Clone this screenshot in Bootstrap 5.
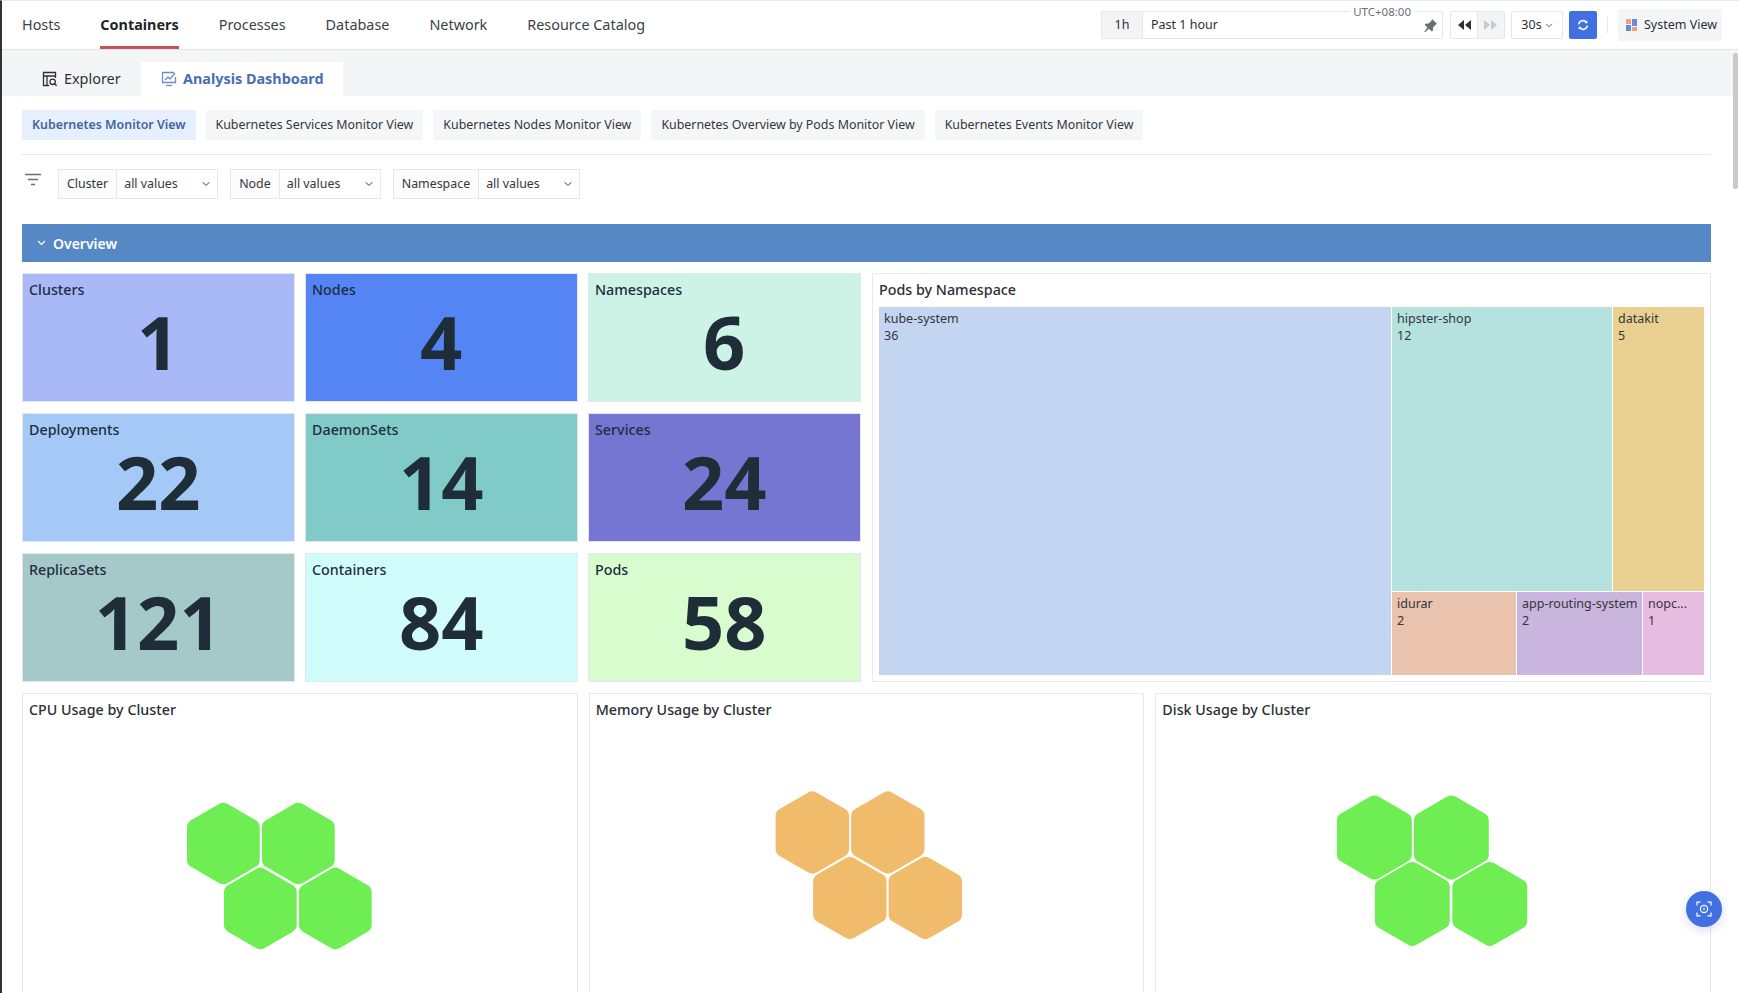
<!DOCTYPE html>
<html lang="en">
<head>
<meta charset="UTF-8" />
<meta name="viewport" content="width=device-width, initial-scale=1.0"/>
<title>Containers - Analysis Dashboard</title>
<link href="https://cdn.jsdelivr.net/npm/bootstrap@5.3.0/dist/css/bootstrap.min.css" rel="stylesheet">
<style>
  html, body { height: 100%; overflow: hidden; }
  body {
    font-family: "Noto Sans", "Open Sans", sans-serif;
    font-size: 12.5px;
    color: #2b2f36;
    background: #fff;
  }
  .app-shell {
    position: relative;
    height: 993px;
    overflow: hidden;
    border-left: 2px solid #333;
    border-top: 1px solid #e6e8ea;
  }
  .top-bar { height: 49px; border-bottom: 1px solid #e3e5e8; padding: 0 16px 0 20px; }
  .main-nav { gap: 40px; height: 100%; }
  .main-nav a {
    display: block;
    height: 48px;
    line-height: 48px;
    font-size: 14.4px;
    color: #3a3f47;
    text-decoration: none;
  }
  .main-nav a.is-on { font-weight: 700; color: #20242a; border-bottom: 3px solid #c2535c; }
  .bar-tools { gap: 6px; }
  .time-box {
    position: relative;
    width: 342px;
    height: 28px;
    border: 1px solid #e5e7ea;
    border-radius: 2px;
    margin-right: 1px;
  }
  .time-tag { width: 41px; background: #f3f4f6; border-right: 1px solid #e5e7ea; }
  .utc-tag {
    position: absolute;
    top: -7px;
    right: 28px;
    padding: 0 3px;
    background: #fff;
    font-size: 11.5px;
    line-height: 14px;
    color: #6b7078;
  }
  .ctl-box { height: 28px; border: 1px solid #e5e7ea; border-radius: 2px; background: #fff; }
  .rewind-box { width: 55px; }
  .rate-box { width: 52px; gap: 3px; }
  .ctl-half { flex: 1; }
  .ctl-half + .ctl-half { background: #f3f4f6; border-left: 1px solid #e5e7ea; }
  .refresh-btn { width: 28px; height: 28px; background: #4170e0; border-radius: 2px; border: 0; padding: 0; }
  .bar-sep { width: 1px; height: 16px; background: #e6e8ea; margin: 0 4px; }
  .system-btn { width: 104px; height: 32px; padding-left: 8px; background: #f3f5f7; gap: 7px; border-radius: 2px; white-space: nowrap; }
  .sub-bar { height: 46px; background: #f3f5f6; padding: 12px 0 0 20px; }
  .sub-tab { height: 34px; padding: 0 0 1px 20px; font-size: 14.4px; gap: 6px; color: #2e3238; width: 119px; }
  .sub-tab.is-on { background: #fff; color: #4a6db3; font-weight: 700; width: 202px; padding-left: 20px; }
  .view-tabs { padding: 14px 0 14px; gap: 10px; border-bottom: 1px solid #e6e8ea; }
  .view-tab {
    height: 30px;
    line-height: 30px;
    padding: 0 10px;
    background: #f4f6f8;
    border-radius: 2px;
    font-size: 12.4px;
    color: #33373d;
  }
  .view-tab.is-on { background: #e6effd; color: #42649f; font-weight: 600; }
  .page-body { padding: 0 27px 0 20px; }
  .filter-row { padding: 14px 0 25px; gap: 12px; }
  .filter-ico { width: 18px; margin: 0 4px 8px 2px; }
  .filter-row .input-group { width: auto; flex: none; height: 30px; }
  .filter-row .input-group-text {
    height: 30px;
    padding: 0 8px;
    font-size: 12.4px;
    color: #33373d;
    background: #fcfcfd;
    border: 1px solid #e5e7ea;
    border-radius: 0;
  }
  .filter-row .form-select {
    width: 101px;
    height: 30px;
    min-height: 30px;
    padding: 0 22px 0 7px;
    margin-left: 0 !important;
    font-size: 12.4px;
    color: #33373d;
    border: 1px solid #e5e7ea;
    border-left: 0;
    border-radius: 0;
    background-position: right 6px center;
    background-size: 10px 8px;
    flex: none;
  }
  .section-bar {
    height: 38px;
    background: #5588c4;
    color: #fff;
    font-size: 14px;
    font-weight: 600;
    padding-left: 15px;
    gap: 7px;
    margin-bottom: 11px;
  }
  .stat-grid {
    display: grid;
    grid-template-columns: 272.5px 272.5px 272.5px 1fr;
    grid-template-rows: 129px 129px 129px;
    column-gap: 10.5px;
    row-gap: 11px;
    margin-bottom: 11px;
  }
  .stat-tile { border: 1px solid #e3e8f0; padding: 6px; color: #1f2d3d; }
  .tile-label { font-size: 14.3px; line-height: 20px; font-weight: 500; }
  .tile-num {
    font-size: 74px;
    font-weight: 700;
    line-height: 74px;
    text-align: center;
    color: #1f2d38;
    margin-top: 5px;
  }
  .t-clusters { background: #a9b9f7; }
  .t-nodes { background: #5585f5; }
  .t-namespaces { background: #cdf3e7; }
  .t-deployments { background: #a4c9f7; }
  .t-daemonsets { background: #80cbc8; }
  .t-services { background: #7675d1; }
  .t-replicasets { background: #a5c8c9; }
  .t-containers { background: #d0fdfc; }
  .t-pods { background: #d9fccf; }
  .chart-panel { border: 1px solid #e6e8ea; background: #fff; }
  .panel-title { font-size: 14.3px; line-height: 20px; font-weight: 500; color: #2b2f36; padding: 6px 6px 7px; }
  .tree-panel { grid-column: 4; grid-row: 1 / 4; padding-bottom: 6px; margin-left: 1px; }
  .tree-map { height: 368px; margin: 0 6px; gap: 1px; }
  .tree-cell { padding: 3px 5px; font-size: 12.5px; line-height: 17px; color: #33363c; overflow: hidden; }
  .c-kube { background: #c4d5f2; width: 512px; flex: none; }
  .c-hipster { background: #b5e2df; width: 220px; flex: none; }
  .c-datakit { background: #e9cf90; flex: 1; }
  .c-idurar { background: #e9c3ae; width: 124px; flex: none; }
  .c-app { background: #c9b5de; width: 125px; flex: none; white-space: nowrap; }
  .c-nopc { background: #e6bde1; flex: 1; }
  .tree-right { gap: 1px; }
  .tree-top { height: 284px; gap: 1px; }
  .tree-bottom { flex: 1; gap: 1px; }
  .usage-row { display: grid; grid-template-columns: repeat(3, 1fr); column-gap: 11px; }
  .usage-card { height: 320px; }
  .usage-card svg { display: block; width: 100%; height: 280px; margin-top: 1px; }
  .hex-green { fill: #6fee53; stroke: #6fee53; }
  .hex-amber { fill: #f0bb6b; stroke: #f0bb6b; }
  .scroll-thumb {
    position: absolute;
    top: 52px;
    right: 0;
    width: 5px;
    height: 136px;
    background: #c9c9c9;
    border-radius: 3px;
  }
  .float-btn {
    position: absolute;
    left: 1684px;
    top: 890px;
    width: 36px;
    height: 36px;
    border-radius: 50%;
    background: #4170e0;
    box-shadow: 0 3px 10px rgba(40, 60, 120, .18);
    border: 0;
    padding: 0;
  }
</style>
</head>
<body>
<div class="app-shell">

  <header class="top-bar d-flex align-items-center">
    <nav class="main-nav d-flex">
      <a href="#">Hosts</a>
      <a href="#" class="is-on">Containers</a>
      <a href="#">Processes</a>
      <a href="#">Database</a>
      <a href="#">Network</a>
      <a href="#">Resource Catalog</a>
    </nav>
    <div class="bar-tools ms-auto d-flex align-items-center">
      <div class="time-box d-flex align-items-stretch">
        <div class="time-tag d-flex align-items-center justify-content-center">1h</div>
        <div class="flex-grow-1 d-flex align-items-center ps-2">Past 1 hour</div>
        <div class="d-flex align-items-center pe-1">
          <svg width="15" height="15" viewBox="0 0 16 16" fill="#6a6d72"><path d="M9.6 1l5.4 5.4-1.3.5-3 3.3-.3 3.6-1.2.6-2.8-2.9L2.4 15l-1.2-.2 3.5-4.6L1.9 7.4l.6-1.2 3.6-.3 3.1-3.2z"/></svg>
        </div>
        <span class="utc-tag">UTC+08:00</span>
      </div>
      <div class="ctl-box rewind-box d-flex align-items-stretch">
        <div class="ctl-half d-flex align-items-center justify-content-center">
          <svg width="14" height="10" viewBox="0 0 14 10" fill="#2c2f34"><path d="M7 0v10L1 5zM14 0v10L8 5z"/></svg>
        </div>
        <div class="ctl-half d-flex align-items-center justify-content-center">
          <svg width="14" height="10" viewBox="0 0 14 10" fill="#c6c9cd"><path d="M0 0v10l6-5zM7 0v10l6-5z"/></svg>
        </div>
      </div>
      <div class="ctl-box rate-box d-flex align-items-center justify-content-center">
        30s
        <svg width="8" height="5" viewBox="0 0 9 6" fill="none" stroke="#4c5056" stroke-width="1.1"><path d="M1 1l3.5 3.5L8 1"/></svg>
      </div>
      <button class="refresh-btn d-flex align-items-center justify-content-center" type="button" aria-label="Refresh">
        <svg width="12" height="12" viewBox="0 0 14 14" fill="none" stroke="#fff" stroke-width="1.8"><path d="M2 6.2A5 5 0 0 1 11 4"/><path d="M12 7.8A5 5 0 0 1 3 10"/><path d="M12 1.6V5H8.8z" fill="#fff" stroke="none"/><path d="M2 12.4V9h3.2z" fill="#fff" stroke="none"/></svg>
      </button>
      <span class="bar-sep"></span>
      <div class="system-btn d-flex align-items-center">
        <svg width="11" height="12" viewBox="0 0 11 12"><rect x="0" y="0" width="5" height="5" fill="#e8a184"/><rect x="0" y="6" width="5" height="6" fill="#6b8ad0"/><rect x="6" y="0" width="5" height="7" fill="#6b8ad0"/><rect x="6" y="8" width="5" height="4" fill="#e8a184"/></svg>
        System View
      </div>
    </div>
  </header>

  <div class="sub-bar d-flex">
    <div class="sub-tab d-flex align-items-center">
      <svg width="16" height="16" viewBox="0 0 16 16" fill="none" stroke="#2e3238" stroke-width="1.3"><path d="M7 14.5H1.5v-13h12V7"/><path d="M1.5 5h12M5 5v9.5"/><circle cx="10.6" cy="10.8" r="2.7"/><path d="M12.6 12.8l2 2"/></svg>
      Explorer
    </div>
    <div class="sub-tab is-on d-flex align-items-center">
      <svg width="16" height="16" viewBox="0 0 16 16" fill="none" stroke="#6c8ccc" stroke-width="1.3"><path d="M13 1.5H1.5v10h13V6"/><path d="M5 14.5h6"/><path d="M4 9l3-3 2 2 5-6"/></svg>
      Analysis Dashboard
    </div>
  </div>

  <div class="page-body">
    <div class="view-tabs d-flex">
      <div class="view-tab is-on">Kubernetes Monitor View</div>
      <div class="view-tab">Kubernetes Services Monitor View</div>
      <div class="view-tab">Kubernetes Nodes Monitor View</div>
      <div class="view-tab">Kubernetes Overview by Pods Monitor View</div>
      <div class="view-tab">Kubernetes Events Monitor View</div>
    </div>

    <div class="filter-row d-flex align-items-center">
      <svg class="filter-ico" width="16" height="14" viewBox="0 0 16 14" fill="none" stroke="#6a6e75" stroke-width="1.4"><path d="M0 1.5h16M3 6.5h10M6 11.5h4"/></svg>
      <div class="input-group">
        <span class="input-group-text">Cluster</span>
        <select class="form-select"><option>all values</option></select>
      </div>
      <div class="input-group">
        <span class="input-group-text">Node</span>
        <select class="form-select"><option>all values</option></select>
      </div>
      <div class="input-group">
        <span class="input-group-text">Namespace</span>
        <select class="form-select"><option>all values</option></select>
      </div>
    </div>

    <div class="section-bar d-flex align-items-center">
      <svg width="9" height="6" viewBox="0 0 9 6" fill="none" stroke="#fff" stroke-width="1.2"><path d="M1 1l3.5 3.5L8 1"/></svg>
      Overview
    </div>

    <div class="stat-grid">
      <div class="stat-tile t-clusters"><div class="tile-label">Clusters</div><div class="tile-num">1</div></div>
      <div class="stat-tile t-nodes"><div class="tile-label">Nodes</div><div class="tile-num">4</div></div>
      <div class="stat-tile t-namespaces"><div class="tile-label">Namespaces</div><div class="tile-num">6</div></div>
      <div class="chart-panel tree-panel d-flex flex-column">
        <div class="panel-title">Pods by Namespace</div>
        <div class="tree-map d-flex">
          <div class="tree-cell c-kube">kube-system<br>36</div>
          <div class="tree-right flex-grow-1 d-flex flex-column">
            <div class="tree-top d-flex">
              <div class="tree-cell c-hipster">hipster-shop<br>12</div>
              <div class="tree-cell c-datakit">datakit<br>5</div>
            </div>
            <div class="tree-bottom d-flex">
              <div class="tree-cell c-idurar">idurar<br>2</div>
              <div class="tree-cell c-app">app-routing-system<br>2</div>
              <div class="tree-cell c-nopc">nopc...<br>1</div>
            </div>
          </div>
        </div>
      </div>
      <div class="stat-tile t-deployments"><div class="tile-label">Deployments</div><div class="tile-num">22</div></div>
      <div class="stat-tile t-daemonsets"><div class="tile-label">DaemonSets</div><div class="tile-num">14</div></div>
      <div class="stat-tile t-services"><div class="tile-label">Services</div><div class="tile-num">24</div></div>
      <div class="stat-tile t-replicasets"><div class="tile-label">ReplicaSets</div><div class="tile-num">121</div></div>
      <div class="stat-tile t-containers"><div class="tile-label">Containers</div><div class="tile-num">84</div></div>
      <div class="stat-tile t-pods"><div class="tile-label">Pods</div><div class="tile-num">58</div></div>
    </div>

    <div class="usage-row">
      <div class="chart-panel usage-card">
        <div class="panel-title">CPU Usage by Cluster</div>
        <svg viewBox="0 0 554 280" class="hex-green" stroke-width="16" stroke-linejoin="round">
          <defs><polygon id="hexCell" points="0,-32.8 28.4,-16.4 28.4,16.4 0,32.8 -28.4,16.4 -28.4,-16.4"/></defs>
          <use href="#hexCell" transform="translate(200.5 115.5)"/>
          <use href="#hexCell" transform="translate(275.5 115.5)"/>
          <use href="#hexCell" transform="translate(237.5 180.5)"/>
          <use href="#hexCell" transform="translate(312.5 180.5)"/>
        </svg>
      </div>
      <div class="chart-panel usage-card">
        <div class="panel-title">Memory Usage by Cluster</div>
        <svg viewBox="0 0 554 280" class="hex-amber" stroke-width="16" stroke-linejoin="round">
          <use href="#hexCell" transform="translate(222.5 104.5) scale(1.01)"/>
          <use href="#hexCell" transform="translate(298 104.5) scale(1.01)"/>
          <use href="#hexCell" transform="translate(260 170) scale(1.01)"/>
          <use href="#hexCell" transform="translate(335.5 170) scale(1.01)"/>
        </svg>
      </div>
      <div class="chart-panel usage-card">
        <div class="panel-title">Disk Usage by Cluster</div>
        <svg viewBox="0 0 554 280" class="hex-green" stroke-width="16" stroke-linejoin="round">
          <use href="#hexCell" transform="translate(218.5 109.5) scale(1.03)"/>
          <use href="#hexCell" transform="translate(295.5 109.5) scale(1.03)"/>
          <use href="#hexCell" transform="translate(256.5 176) scale(1.03)"/>
          <use href="#hexCell" transform="translate(334 176) scale(1.03)"/>
        </svg>
      </div>
    </div>
  </div>

  <div class="scroll-thumb"></div>
  <button class="float-btn d-flex align-items-center justify-content-center" type="button" aria-label="Snapshot">
    <svg width="16" height="16" viewBox="0 0 16 16" fill="none" stroke="#fff" stroke-width="1.2"><path d="M1 4.5V1.2h3.5M11.5 1.2H15v3.3M15 11.5v3.3h-3.5M4.5 14.8H1v-3.3"/><circle cx="8" cy="8" r="3.6"/><path d="M8 6.5v3" stroke-width="1"/></svg>
  </button>
</div>
</body>
</html>
